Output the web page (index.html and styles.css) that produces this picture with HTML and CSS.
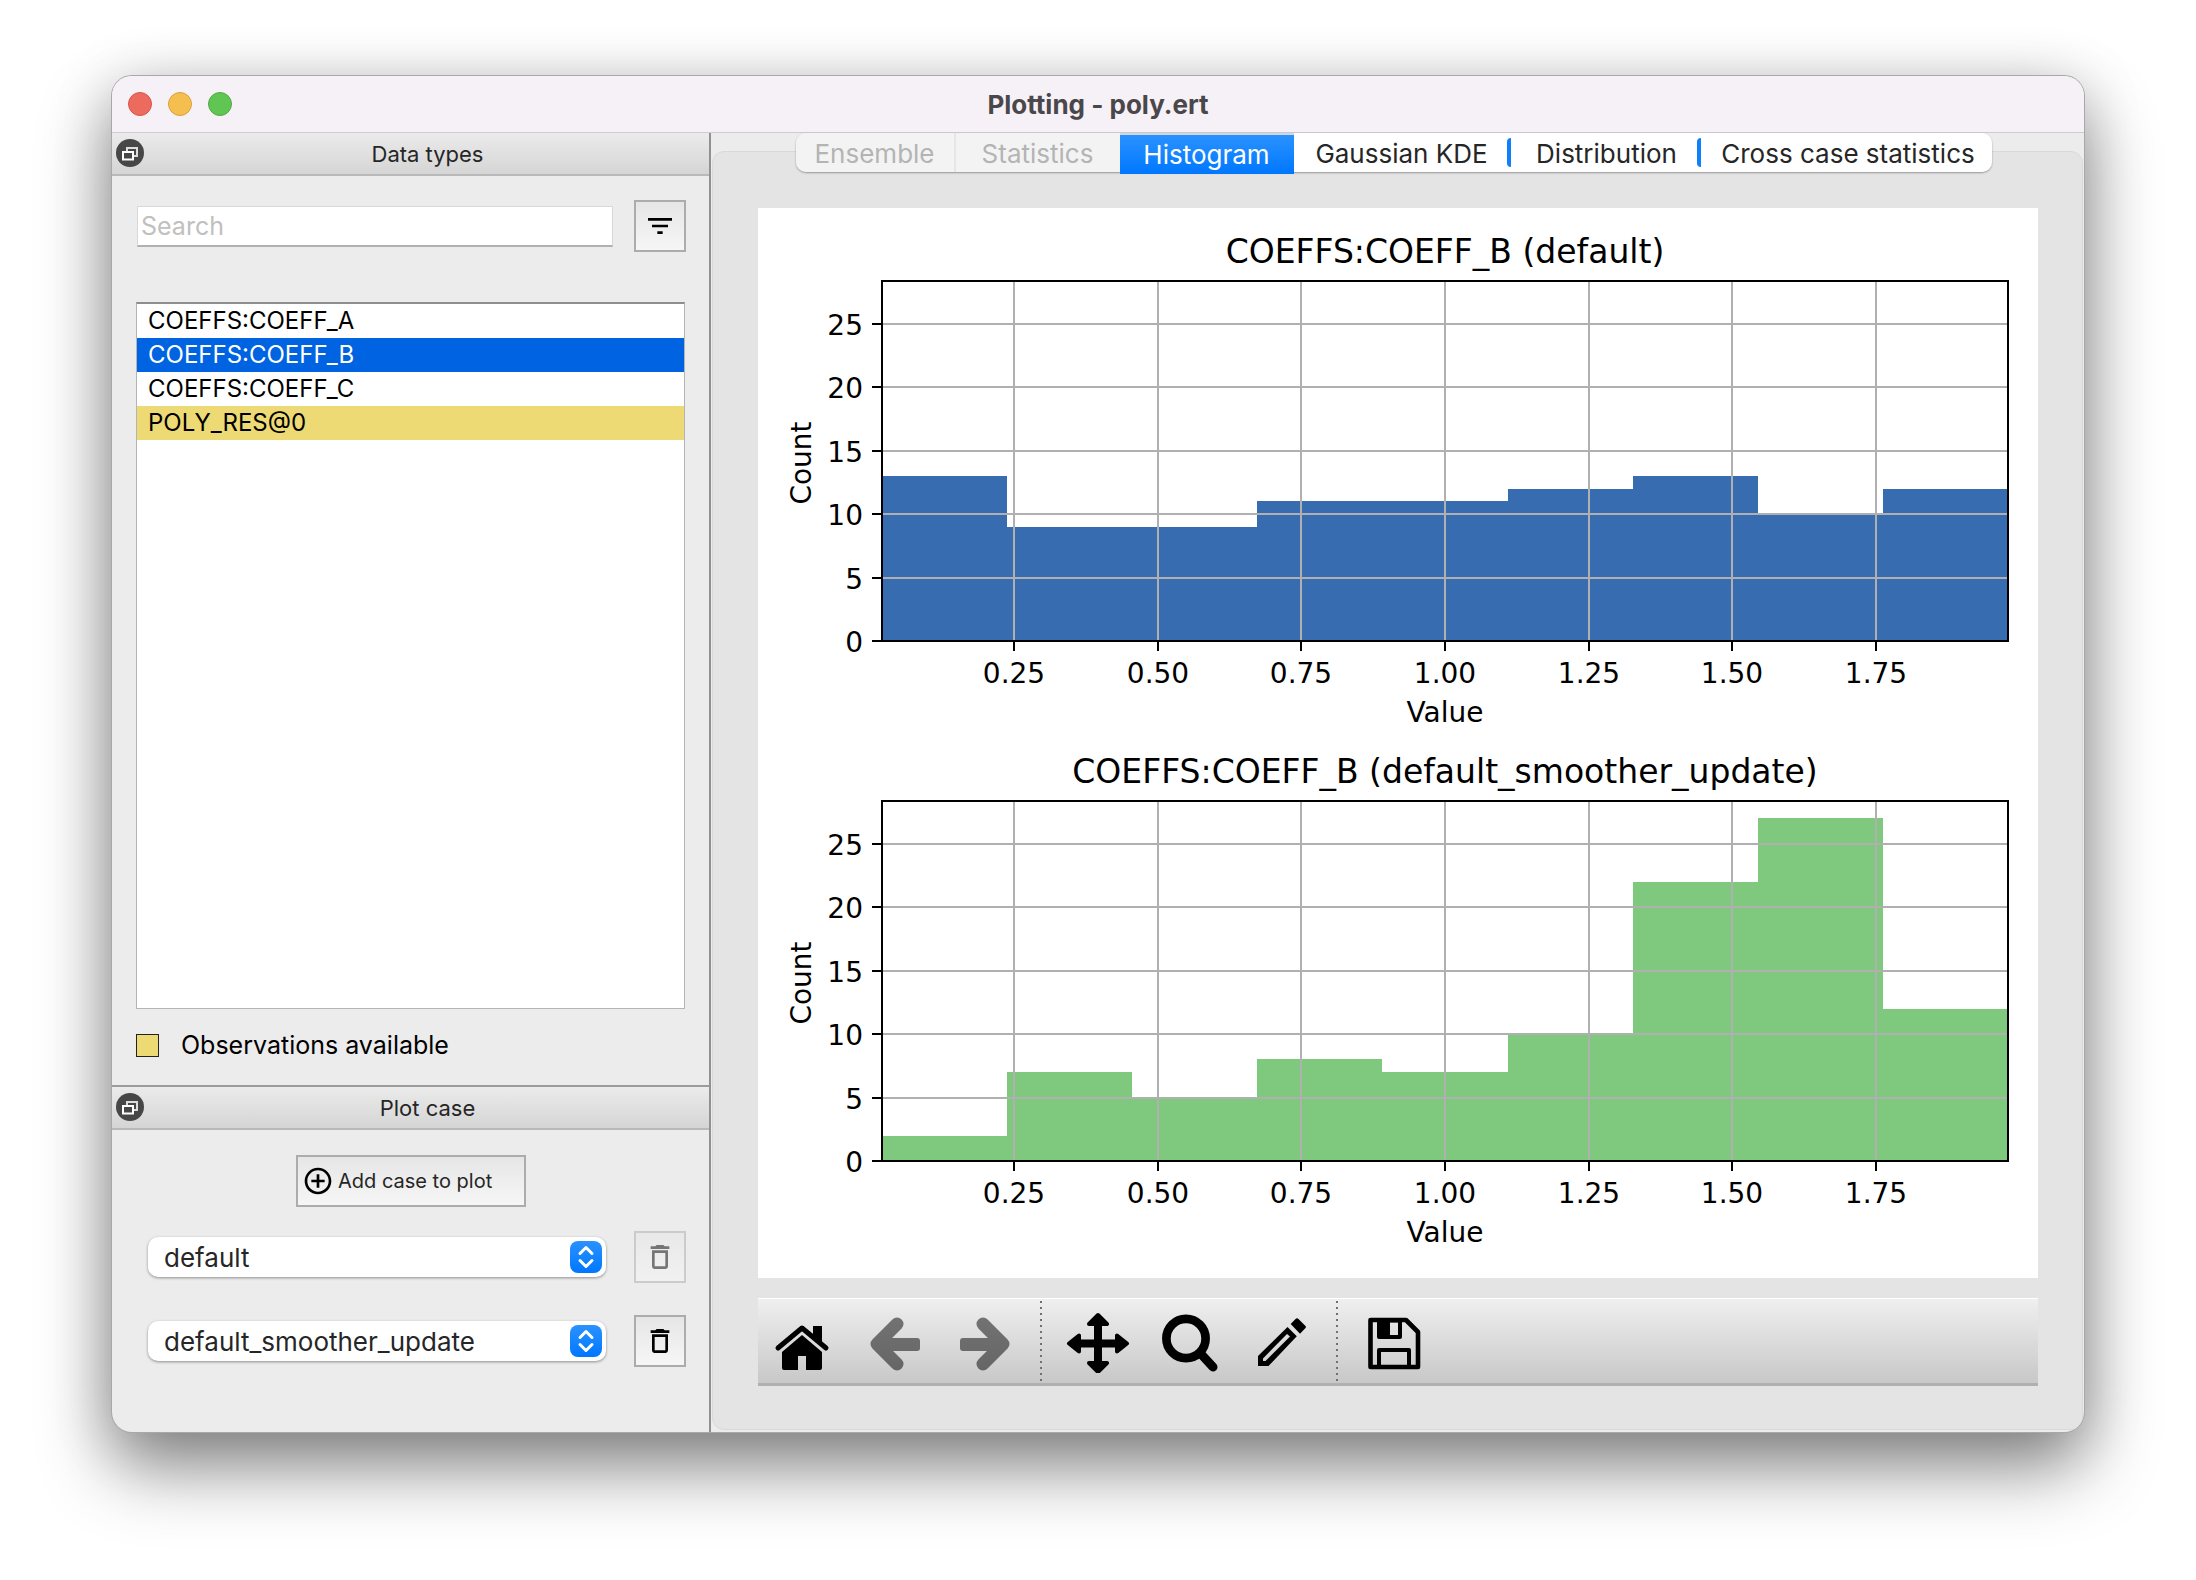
FILE: index.html
```html
<!DOCTYPE html>
<html lang="en">
<head>
<meta charset="utf-8">
<title>Plotting - poly.ert</title>
<link rel="stylesheet" href="styles.css">
</head>
<body>
<main class="window">
  <header class="titlebar">
    <div class="lights">
      <button class="light light-close" aria-label="Close"></button>
      <button class="light light-min" aria-label="Minimize"></button>
      <button class="light light-max" aria-label="Zoom"></button>
    </div>
    <h1 class="window-title">Plotting - poly.ert</h1>
  </header>
  <div class="content">
    <aside class="docks">
      <section class="dock dock-types">
        <header class="dock-header">
          <button class="float-btn" aria-label="Float Data types">
            <svg viewBox="0 0 28 28"><circle cx="14" cy="14" r="14" fill="#474747"/><path d="M11 12V9h10v8h-3" fill="none" stroke="#ddd" stroke-width="2"/><path d="M7 13h10v7.500H7z" fill="none" stroke="#fff" stroke-width="2"/></svg>
          </button>
          <h2 class="dock-title">Data types</h2>
        </header>
        <div class="types-body">
          <div class="search-row">
            <input class="search" type="text" placeholder="Search" aria-label="Search">
            <button class="icon-btn" aria-label="Filter">
              <svg viewBox="0 0 24 24" width="32" height="32"><path d="M3 6h18v2H3zM6 11h12v2H6zM10 16h4v2h-4z"/></svg>
            </button>
          </div>
          <ul class="type-list">
            <li class="type">COEFFS:COEFF_A</li>
            <li class="type type-selected">COEFFS:COEFF_B</li>
            <li class="type">COEFFS:COEFF_C</li>
            <li class="type type-observed">POLY_RES@0</li>
          </ul>
          <p class="legend"><span class="swatch"></span>Observations available</p>
        </div>
      </section>
      <section class="dock dock-cases">
        <header class="dock-header">
          <button class="float-btn" aria-label="Float Plot case">
            <svg viewBox="0 0 28 28"><circle cx="14" cy="14" r="14" fill="#474747"/><path d="M11 12V9h10v8h-3" fill="none" stroke="#ddd" stroke-width="2"/><path d="M7 13h10v7.500H7z" fill="none" stroke="#fff" stroke-width="2"/></svg>
          </button>
          <h2 class="dock-title">Plot case</h2>
        </header>
        <div class="cases-body">
          <button class="add-btn">
            <svg viewBox="0 0 24 24" width="32" height="32"><path d="M13 7h-2v4H7v2h4v4h2v-4h4v-2h-4V7zm-1-5C6.480 2 2 6.480 2 12s4.480 10 10 10 10-4.480 10-10S17.520 2 12 2zm0 18c-4.410 0-8-3.590-8-8s3.590-8 8-8 8 3.590 8 8-3.590 8-8 8z"/></svg>
            Add case to plot
          </button>
          <div class="case-row">
            <div class="combo">
              <select class="combo-select" aria-label="Case 1"><option>default</option></select>
              <svg class="combo-arrows" viewBox="0 0 32 32"><path d="M10 12.500L16 6.500l6 6M10 19.500l6 6 6-6" fill="none" stroke="#fff" stroke-width="3" stroke-linecap="round" stroke-linejoin="round"/></svg>
            </div>
            <button class="icon-btn" aria-label="Remove case 1" disabled>
              <svg viewBox="0 0 24 24" width="32" height="32"><path d="M6 19c0 1.100.9 2 2 2h8c1.100 0 2-.9 2-2V7H6v12zM8 9h8v10H8V9zm7.500-5l-1-1h-5l-1 1H5v2h14V4z"/></svg>
            </button>
          </div>
          <div class="case-row">
            <div class="combo">
              <select class="combo-select" aria-label="Case 2"><option>default_smoother_update</option></select>
              <svg class="combo-arrows" viewBox="0 0 32 32"><path d="M10 12.500L16 6.500l6 6M10 19.500l6 6 6-6" fill="none" stroke="#fff" stroke-width="3" stroke-linecap="round" stroke-linejoin="round"/></svg>
            </div>
            <button class="icon-btn" aria-label="Remove case 2">
              <svg viewBox="0 0 24 24" width="32" height="32"><path d="M6 19c0 1.100.9 2 2 2h8c1.100 0 2-.9 2-2V7H6v12zM8 9h8v10H8V9zm7.500-5l-1-1h-5l-1 1H5v2h14V4z"/></svg>
            </button>
          </div>
        </div>
      </section>
    </aside>
    <section class="plots">
      <nav class="tabs">
        <button class="tab tab-ensemble" disabled>Ensemble</button>
        <button class="tab tab-statistics" disabled>Statistics</button>
        <button class="tab tab-active">Histogram</button>
        <button class="tab tab-kde">Gaussian KDE</button>
        <button class="tab tab-distribution">Distribution</button>
        <button class="tab tab-cross">Cross case statistics</button>
      </nav>
      <div class="pane">
        <svg class="figure" viewBox="0 0 1280 1070" role="img" aria-label="Histograms of COEFFS:COEFF_B">
          <g id="axes-default" transform="translate(124 73)"></g>
          <g id="axes-update" transform="translate(124 593)"></g>
        </svg>
        <div class="toolbar">
          <button class="tool" aria-label="Home"><svg viewBox="0 0 64 64"><path d="M43 17h9v18l-9-8z"/><path d="M8 39L32 19l24 20" fill="none" stroke="#000" stroke-width="5" stroke-linecap="round" stroke-linejoin="round"/><path d="M12 43l20-17 20 17v16q0 2-2 2H36V47h-8v14H14q-2 0-2-2z"/></svg></button>
          <button class="tool" aria-label="Back" disabled><svg viewBox="0 0 64 64"><path d="M35 15L15 35l20 20" fill="none" stroke="#000" stroke-width="13" stroke-linecap="round" stroke-linejoin="round"/><rect x="15" y="29" width="43" height="13" rx="3"/></svg></button>
          <button class="tool" aria-label="Forward" disabled><svg viewBox="0 0 64 64"><path d="M29 15l20 20-20 20" fill="none" stroke="#000" stroke-width="13" stroke-linecap="round" stroke-linejoin="round"/><rect x="6" y="29" width="43" height="13" rx="3"/></svg></button>
          <span class="divider"></span>
          <button class="tool" aria-label="Pan"><svg viewBox="0 0 64 64"><path d="M28 10h8v49h-8zM8 30.500h48v8H8z"/><path d="M32 6l9 9H23zM32 63l9-9H23zM3 34.500l10-8v16zM61 34.500l-10-8v16z" stroke="#000" stroke-width="4" stroke-linejoin="round"/></svg></button>
          <button class="tool" aria-label="Zoom to rectangle"><svg viewBox="0 0 64 64"><circle cx="28" cy="29.500" r="19.600" fill="none" stroke="#000" stroke-width="8.700"/><path d="M43 45l12 13" stroke="#000" stroke-width="9" stroke-linecap="round"/></svg></button>
          <button class="tool" aria-label="Edit parameters"><svg viewBox="0 0 64 64"><path d="M45.500 10q1.500-1.500 3 0l7 7q1 1 0 2L50 24.700 40.700 15z"/><path d="M37.500 18l9.300 9.300L18.500 57H8V47zM37 25L13 49.500V52h2.500L40 27.500z" fill-rule="evenodd"/></svg></button>
          <span class="divider"></span>
          <button class="tool" aria-label="Save figure"><svg viewBox="0 0 64 64"><path d="M8.500 11H44l12 12v35H8.500z" fill="none" stroke="#000" stroke-width="4.600" stroke-linejoin="round"/><path d="M15 10h25v18q0 2-2 2H17q-2 0-2-2zM28 13.500V26h8V13.500z" fill-rule="evenodd"/><path d="M17 58V41h30v17" fill="none" stroke="#000" stroke-width="4" stroke-linejoin="round"/></svg></button>
        </div>
      </div>
    </section>
  </div>
</main>
<script src="chart.js"></script>
</body>
</html>
```
FILE: styles.css
```css
* { box-sizing: border-box; }
body {
  margin: 0;
  min-height: 100vh;
  display: flex;
  padding: 76px 112px 148px;
  background: #fff;
  color: #000;
  font-family: Inter, "Liberation Sans", sans-serif;
  font-size: 25px;
}
h1, h2, p, ul { margin: 0; padding: 0; }
button, input, select { font: inherit; color: inherit; margin: 0; }
button { padding: 0; border: 0; background: none; }
svg { display: block; }

.window {
  flex: 1;
  display: flex;
  flex-direction: column;
  border-radius: 20px;
  overflow: hidden;
  background: #ececec;
  box-shadow: 0 0 0 1px #a8a8a8, 0 36px 72px rgba(0, 0, 0, .44), 0 8px 60px rgba(0, 0, 0, .18);
}
.titlebar {
  height: 57px;
  display: grid;
  grid-template-columns: 1fr auto 1fr;
  align-items: center;
  padding: 0 16px;
  background: #f6f1f7;
  border-bottom: 1px solid #cfcbd0;
}
.lights { display: flex; gap: 16px; }
.light { width: 24px; height: 24px; border-radius: 50%; border: 1px solid; }
.light-close { background: #ed6a5e; border-color: #d5564a; }
.light-min { background: #f5bf4f; border-color: #d9a13b; }
.light-max { background: #61c554; border-color: #4fab42; }
.window-title { font-size: 26px; font-weight: 700; color: #4a474b; }

.content { flex: 1; display: flex; }
.docks {
  flex: 0 0 599px;
  display: flex;
  flex-direction: column;
  border-right: 2px solid #919191;
}
.dock { display: flex; flex-direction: column; }
.dock-types { flex: 1; }
.dock-cases { height: 347px; border-top: 2px solid #9c9c9c; }
.dock-header {
  height: 43px;
  display: grid;
  grid-template-columns: 28px 1fr;
  align-items: center;
  padding: 0 0 2px 4px;
  background: linear-gradient(#ebebeb, #d5d5d5);
  border-bottom: 2px solid #b9b9b9;
}
.float-btn { width: 28px; height: 28px; }
.dock-title { padding: 2px 0 0 2px; text-align: center; font-size: 22px; font-weight: 400; color: #262626; }
.types-body { flex: 1; display: flex; flex-direction: column; padding: 24px 23px 24px 24px; }
.search-row { display: flex; align-items: center; justify-content: space-between; padding-left: 1px; }
.search {
  width: 476px;
  height: 41px;
  padding: 0 3px;
  border: 1px solid #d8d8d8;
  border-bottom: 2px solid #b0b0b0;
  background: #fff;
  font-size: 25px;
}
.search::placeholder { color: #c0c0c0; opacity: 1; }
.icon-btn {
  width: 52px;
  height: 52px;
  display: grid;
  place-items: center;
  border: 2px solid #acacac;
  background: linear-gradient(#e6e6e6, #f6f6f6);
}
.icon-btn:disabled { opacity: .5; }
.type-list {
  flex: 1;
  margin: 50px 1px 0 0;
  list-style: none;
  border: 1px solid #b4b4b4;
  border-top: 2px solid #8e8e8e;
  background: #fff;
}
.type { height: 34px; padding-left: 11px; font-size: 24px; line-height: 34px; }
.type-selected { background: #0063e1; color: #fff; }
.type-observed { background: #edda74; }
.legend { display: flex; align-items: center; gap: 22px; margin-top: 20px; line-height: 32px; }
.swatch { width: 23px; height: 23px; border: 1px solid #222; background: #edda74; }

.cases-body { padding: 25px 23px 0 36px; }
.add-btn {
  display: flex;
  align-items: center;
  gap: 4px;
  width: 230px;
  height: 52px;
  margin: 0 0 24px 148px;
  padding-left: 4px;
  border: 2px solid #acacac;
  background: linear-gradient(#e6e6e6, #f6f6f6);
  font-size: 20px;
  color: #262626;
}
.case-row { display: flex; align-items: center; justify-content: space-between; height: 52px; margin-bottom: 32px; }
.combo { position: relative; width: 458px; height: 40px; }
.combo-select {
  width: 100%;
  height: 100%;
  appearance: none;
  padding: 0 50px 0 16px;
  border: 0;
  border-radius: 10px;
  background: #fff;
  color: #262626;
  font-size: 26px;
  box-shadow: 0 1px 3px rgba(0, 0, 0, .4);
}
.combo-arrows {
  position: absolute;
  right: 4px;
  top: 4px;
  width: 32px;
  height: 32px;
  border-radius: 8px;
  background: linear-gradient(#2a92ff, #0077ff);
  pointer-events: none;
}

.plots { flex: 1; min-width: 0; display: flex; flex-direction: column; padding: 0 1px 2px; }
.tabs {
  position: relative;
  z-index: 1;
  display: flex;
  align-self: center;
  height: 39px;
  margin: 0 8px -21px 0;
  border-radius: 10px;
  box-shadow: 0 1px 2px rgba(0, 0, 0, .35);
}
.tab { position: relative; height: 39px; padding-top: 2px; background: #fff; color: #262626; font-size: 26px; white-space: nowrap; }
.tab:disabled { background: #f3f3f3; color: #b4b4b4; }
.tab-ensemble { width: 160px; border-radius: 10px 0 0 10px; border-right: 2px solid #e6e6e6; }
.tab-statistics { width: 164px; }
.tab-active { width: 174px; height: 41px; padding-top: 0; border-top: 2px solid #ced9e6; background: linear-gradient(#2a92ff, #0077ff); color: #fff; }
.tab-kde { width: 216px; }
.tab-distribution { width: 190px; padding-left: 4px; }
.tab-cross { width: 292px; padding-left: 5px; border-radius: 0 10px 10px 0; }
.tab-distribution::before, .tab-cross::before {
  content: "";
  position: absolute;
  left: -3px;
  top: 5px;
  width: 4px;
  height: 29px;
  border-radius: 4px 0 0 4px;
  background: #0f80fa;
}
.pane {
  flex: 1;
  display: flex;
  flex-direction: column;
  padding: 56px 44px 43px 45px;
  border: 1px solid #d9d9d9;
  border-radius: 12px;
  background: #e4e4e4;
}
.figure { width: 100%; height: auto; background: #fff; font-family: "DejaVu Sans", sans-serif; }
.figure-title { font-size: 33px; text-anchor: middle; }
.label { font-size: 28px; text-anchor: middle; }
.label-y { text-anchor: end; }
.grid { stroke: #b0b0b0; stroke-width: 2; }
.tick { stroke: #000; stroke-width: 2; }
.frame { fill: none; stroke: #000; stroke-width: 2; }
.bar-default { fill: #386cb0; }
.bar-update { fill: #7fc97f; }

.toolbar {
  display: flex;
  align-items: center;
  height: 88px;
  margin-top: 20px;
  padding-left: 12px;
  border-top: 1px solid #fff;
  border-bottom: 3px solid #b0b0b0;
  background: linear-gradient(#efefef, #c8c8c8);
}
.tool { width: 64px; height: 64px; margin-right: 28px; }
.tool:disabled { opacity: .5; }
.divider { width: 2px; height: 80px; margin: 0 24px 0 -6px; background: repeating-linear-gradient(#707070 0 2px, transparent 2px 6px); }
```
FILE: chart.js
```js
const WIDTH = 1126;
const HEIGHT = 360;
const UNIT = HEIGHT / 28.35;
const X_TICKS = [["0.25", 132], ["0.50", 276], ["0.75", 419], ["1.00", 563], ["1.25", 707], ["1.50", 850], ["1.75", 994]];

function histogram(id, title, barClass, counts) {
  const step = WIDTH / counts.length;
  let outline = `M0 ${HEIGHT}`;
  counts.forEach((n, i) => {
    outline += `V${Math.round(HEIGHT - n * UNIT)}H${Math.round((i + 1) * step)}`;
  });
  let out = `<path class="${barClass}" d="${outline}V${HEIGHT}z"/>`;
  for (const [text, x] of X_TICKS) {
    out += `<path class="grid" d="M${x} 0V${HEIGHT}"/><path class="tick" d="M${x} ${HEIGHT}v10"/>`;
    out += `<text class="label" x="${x}" y="${HEIGHT + 42}">${text}</text>`;
  }
  for (let n = 0; n <= 25; n += 5) {
    const y = Math.round(HEIGHT - n * UNIT);
    out += `<path class="grid" d="M0 ${y}H${WIDTH}"/><path class="tick" d="M-10 ${y}H0"/>`;
    out += `<text class="label label-y" x="-19" y="${y + 11}">${n}</text>`;
  }
  out += `<rect class="frame" width="${WIDTH}" height="${HEIGHT}"/>`;
  out += `<text class="figure-title" x="563" y="-18">${title}</text>`;
  out += `<text class="label" x="563" y="${HEIGHT + 81}">Value</text>`;
  out += `<text class="label" transform="translate(-71 182) rotate(-90)">Count</text>`;
  document.getElementById(id).innerHTML = out;
}

histogram("axes-default", "COEFFS:COEFF_B (default)", "bar-default", [13, 9, 9, 11, 11, 12, 13, 10, 12]);
histogram("axes-update", "COEFFS:COEFF_B (default_smoother_update)", "bar-update", [2, 7, 5, 8, 7, 10, 22, 27, 12]);
```
